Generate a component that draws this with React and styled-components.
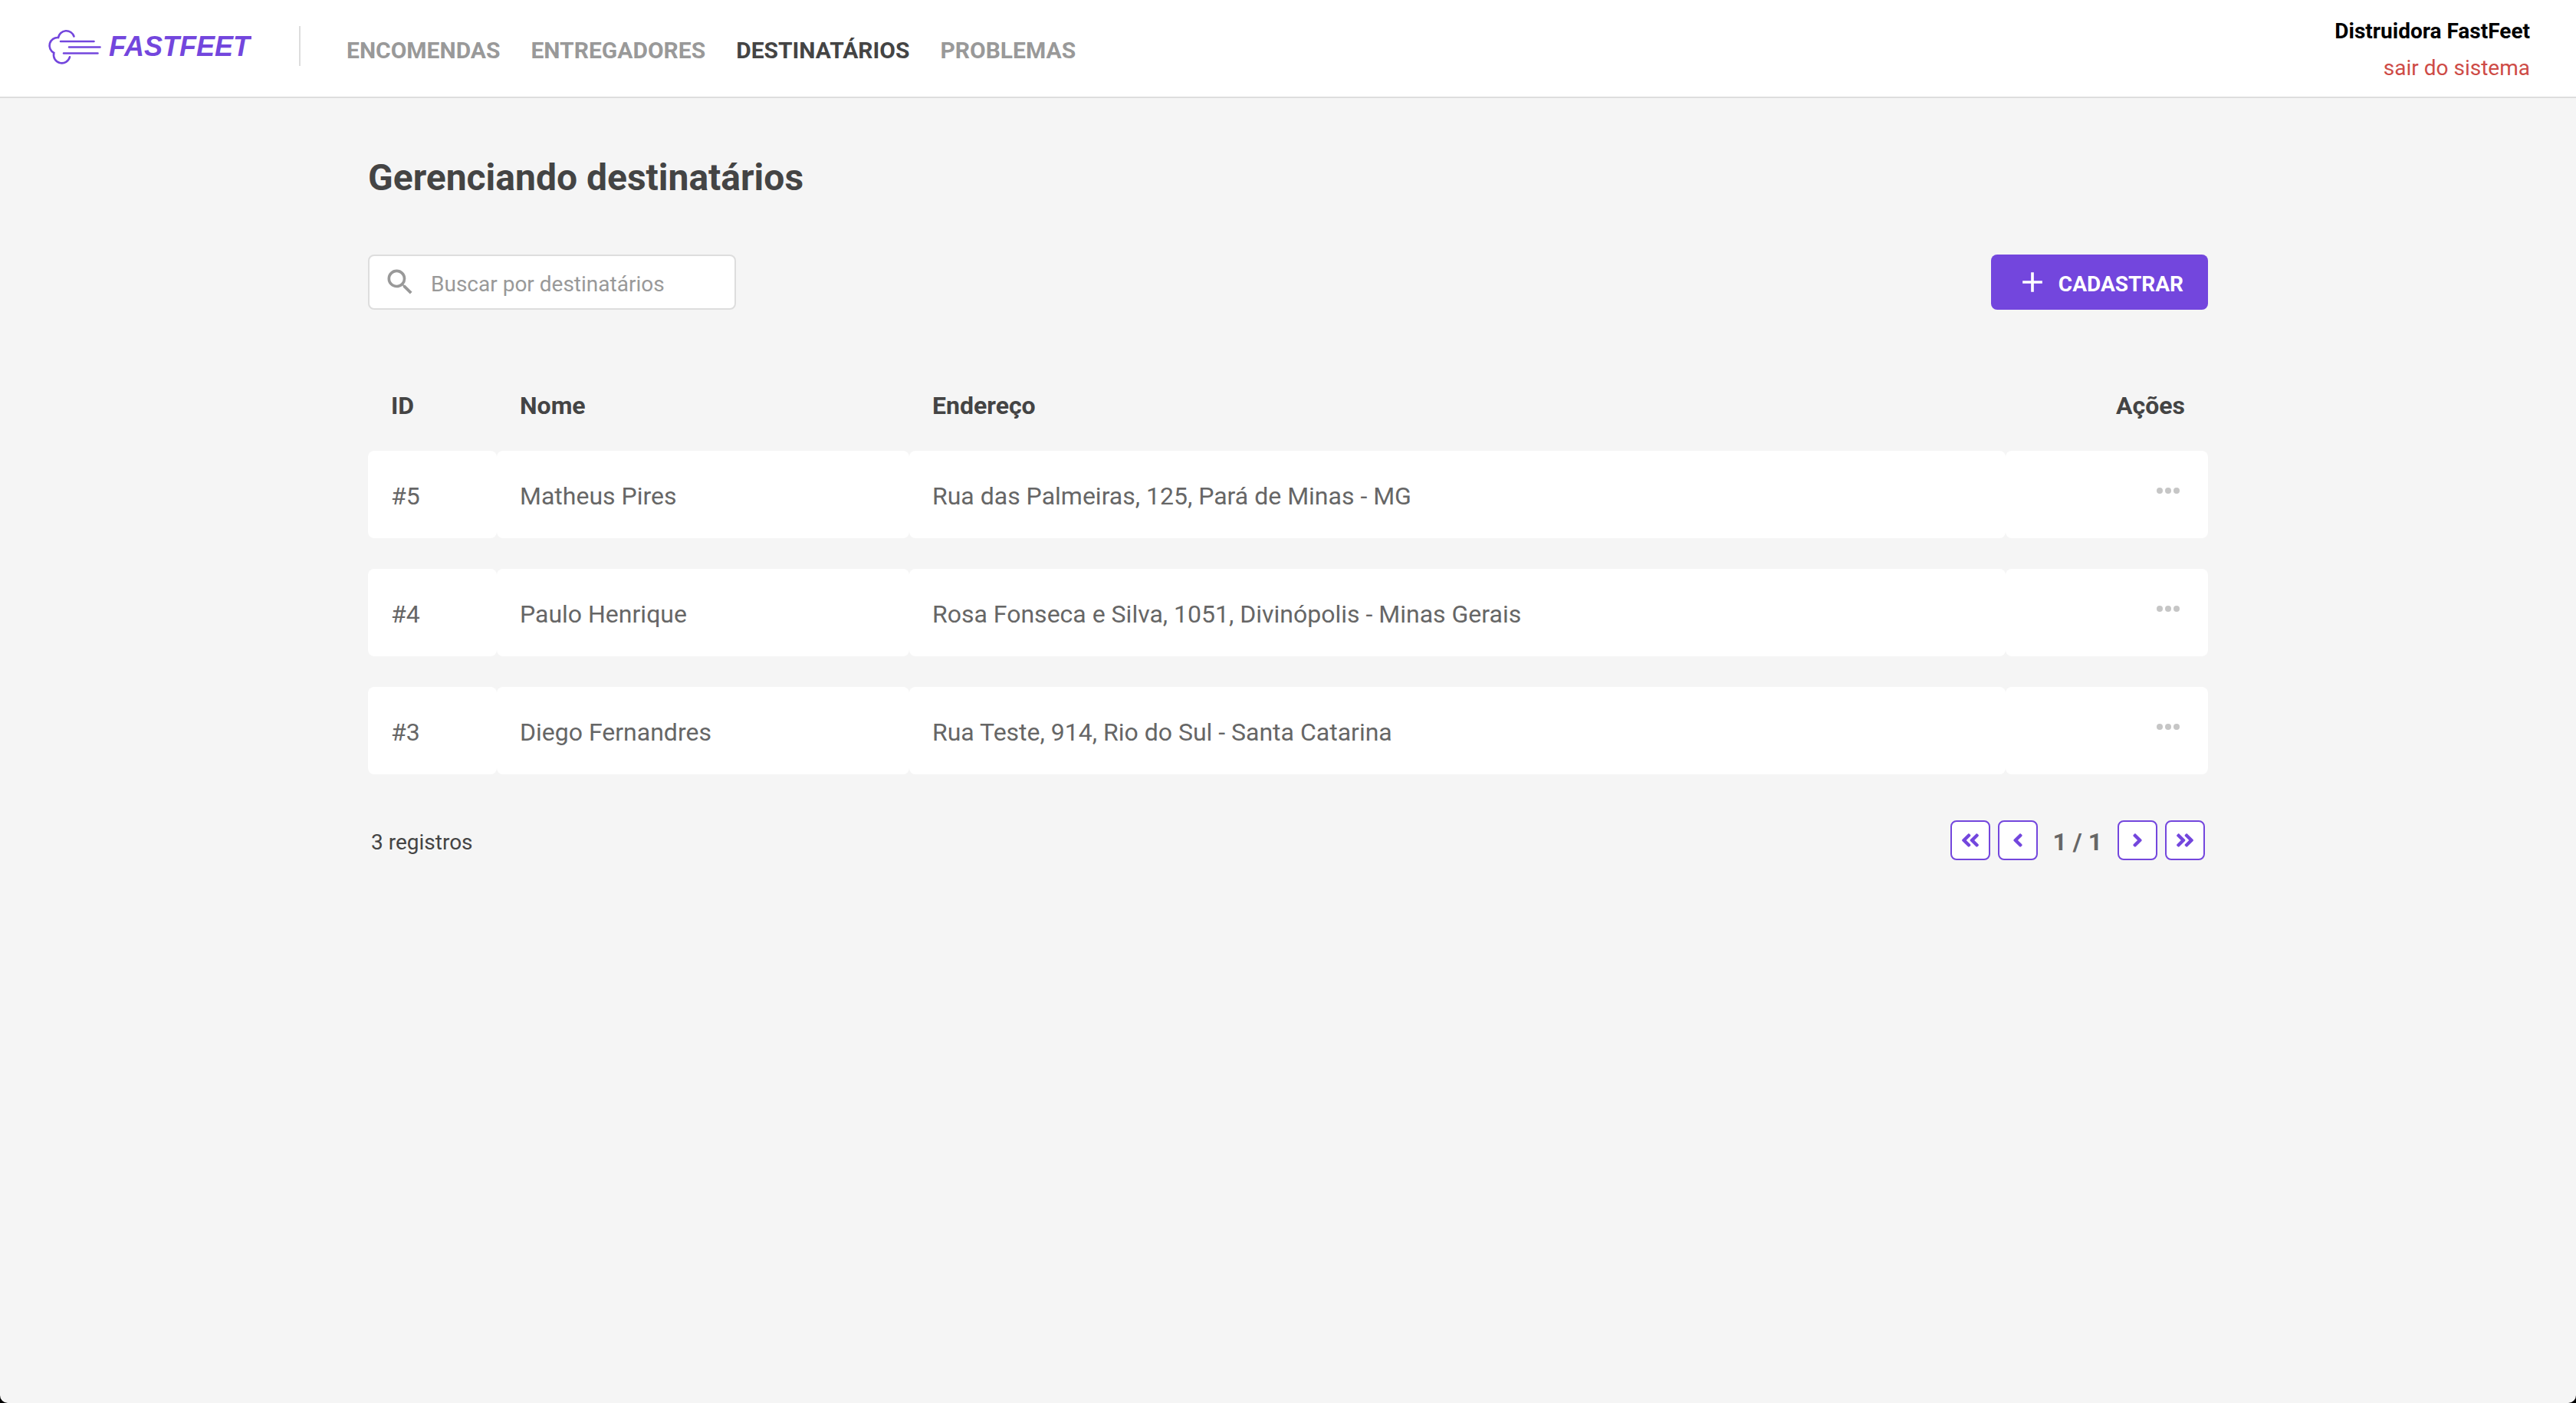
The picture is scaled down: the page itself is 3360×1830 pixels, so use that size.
import React, { useState } from 'react';
import styled, { createGlobalStyle, css } from 'styled-components';
import { MdSearch, MdAdd } from 'react-icons/md';
import {
  FaAngleDoubleLeft,
  FaAngleLeft,
  FaAngleRight,
  FaAngleDoubleRight,
} from 'react-icons/fa';

const colors = {
  primary: '#7346dd',
  danger: '#ce4b46',
  title: '#444444',
  text: '#666666',
  muted: '#999999',
  dots: '#c6c6c6',
  border: '#dddddd',
  page: '#f5f5f5',
};

const GlobalStyle = createGlobalStyle`
  *, *::before, *::after {
    box-sizing: border-box;
    margin: 0;
    padding: 0;
  }

  html {
    background: #000000;
  }

  body {
    color: ${colors.title};
    font: 400 28px/34px Roboto, Arial, sans-serif;
    -webkit-font-smoothing: antialiased;
  }

  button, input {
    font: inherit;
  }

  button {
    border: 0;
    background: none;
    cursor: pointer;
  }

  a {
    text-decoration: none;
  }
`;

const Page = styled.div`
  min-height: 100vh;
  background: ${colors.page};
  border-radius: 0 0 10px 10px;
`;

const Header = styled.header`
  display: flex;
  align-items: center;
  height: 128px;
  padding: 0 60px 6px;
  background: #ffffff;
  border-bottom: 2px solid ${colors.border};
`;

const LogoLink = styled.a`
  display: flex;
  align-items: center;
  height: 52px;
  padding-right: 62px;
  border-right: 2px solid ${colors.border};

  svg {
    display: block;
  }
`;

const LogoText = styled.text`
  fill: ${colors.primary};
  font: italic 700 36px 'Liberation Sans', Arial, sans-serif;
`;

const Nav = styled.nav`
  display: flex;
  gap: 40px;
  padding: 12px 0 0 60px;
`;

const NavLink = styled.a`
  color: ${({ $active }) => ($active ? colors.title : colors.muted)};
  font-size: 30px;
  font-weight: 700;
`;

const Account = styled.div`
  display: flex;
  flex-direction: column;
  align-items: flex-end;
  gap: 14px;
  margin-left: auto;
  padding-top: 10px;
`;

const AccountName = styled.strong`
  color: #000000;
`;

const SignOut = styled.button`
  color: ${colors.danger};
`;

const Content = styled.main`
  width: 100%;
  max-width: 2400px;
  margin: 0 auto;
  padding-top: 74px;
`;

const Title = styled.h1`
  font-size: 48px;
  line-height: 60px;
`;

const Toolbar = styled.div`
  display: flex;
  align-items: center;
  justify-content: space-between;
  margin-top: 70px;
`;

const SearchBox = styled.label`
  display: flex;
  align-items: center;
  gap: 18px;
  width: 480px;
  height: 72px;
  padding: 0 18px;
  background: #ffffff;
  border: 2px solid ${colors.border};
  border-radius: 8px;
  color: ${colors.muted};

  svg {
    flex: none;
  }
`;

const SearchInput = styled.input`
  flex: 1;
  min-width: 0;
  padding-top: 6px;
  border: 0;
  outline: 0;
  background: transparent;
  color: ${colors.title};

  &::placeholder {
    color: ${colors.muted};
    opacity: 1;
  }
`;

const AddButton = styled.button`
  display: flex;
  align-items: center;
  gap: 12px;
  height: 72px;
  padding: 0 32px;
  border-radius: 8px;
  background: ${colors.primary};
  color: #ffffff;
  font-weight: 700;

  span {
    padding-top: 6px;
  }
`;

const Table = styled.table`
  width: 100%;
  margin-top: 48px;
  table-layout: fixed;
  border-collapse: separate;
  border-spacing: 0 40px;
  font-size: 32px;
`;

const cell = css`
  padding: 4px 30px 0;
  text-align: ${({ $right }) => ($right ? 'right' : 'left')};
`;

const HeadCell = styled.th`
  ${cell}
  width: ${({ $width }) => $width || 'auto'};
  height: 56px;
  padding-top: 18px;
  font-weight: 700;
`;

const Cell = styled.td`
  ${cell}
  height: 114px;
  background: #ffffff;
  border-radius: 8px;
  color: ${colors.text};
`;

const MenuButton = styled.button`
  display: flex;
  margin: 0 0 14px auto;
  padding: 6px 7px;
  color: ${colors.dots};
`;

const Footer = styled.footer`
  display: flex;
  align-items: center;
  justify-content: space-between;
  padding: 20px 4px 0;
`;

const RecordCount = styled.span`
  padding-top: 6px;
`;

const Pager = styled.div`
  display: flex;
  align-items: center;
  gap: 10px;
`;

const PageButton = styled.button`
  display: flex;
  align-items: center;
  justify-content: center;
  width: 52px;
  height: 52px;
  background: #ffffff;
  border: 2px solid ${colors.primary};
  border-radius: 8px;
  color: ${colors.primary};
`;

const PageCount = styled.strong`
  padding: 4px 10px 0;
  color: ${colors.text};
  font-size: 32px;
`;

const navItems = ['ENCOMENDAS', 'ENTREGADORES', 'DESTINATÁRIOS', 'PROBLEMAS'];

const recipients = [
  { id: 5, name: 'Matheus Pires', address: 'Rua das Palmeiras, 125, Pará de Minas - MG' },
  { id: 4, name: 'Paulo Henrique', address: 'Rosa Fonseca e Silva, 1051, Divinópolis - Minas Gerais' },
  { id: 3, name: 'Diego Fernandres', address: 'Rua Teste, 914, Rio do Sul - Santa Catarina' },
];

function Logo() {
  return (
    <svg width="268" height="52" viewBox="60 34 268 52" role="img" aria-label="FastFeet">
      <g fill="none" stroke={colors.primary} strokeWidth="2.6" strokeLinecap="round">
        <path d="M96.500 47.500A10.600 10.600 0 0 0 76 49A10.600 10.600 0 0 0 70.300 69A10.600 10.600 0 0 0 91 74.300" />
        <path d="M79 54H122.500M90 61.500H130.500M83 69.500H127.500" />
      </g>
      <LogoText x="142" y="73">FASTFEET</LogoText>
    </svg>
  );
}

function Dots() {
  return (
    <svg width="30" height="8" viewBox="0 0 30 8" fill="currentColor" aria-hidden="true">
      <circle cx="4" cy="4" r="4" />
      <circle cx="15" cy="4" r="4" />
      <circle cx="26" cy="4" r="4" />
    </svg>
  );
}

export default function App() {
  const [query, setQuery] = useState('');
  const rows = recipients.filter(({ name }) =>
    name.toLowerCase().includes(query.toLowerCase())
  );

  return (
    <Page>
      <GlobalStyle />
      <Header>
        <LogoLink href="#">
          <Logo />
        </LogoLink>
        <Nav>
          {navItems.map((item) => (
            <NavLink key={item} href="#" $active={item === 'DESTINATÁRIOS'}>
              {item}
            </NavLink>
          ))}
        </Nav>
        <Account>
          <AccountName>Distruidora FastFeet</AccountName>
          <SignOut type="button">sair do sistema</SignOut>
        </Account>
      </Header>
      <Content>
        <Title>Gerenciando destinatários</Title>
        <Toolbar>
          <SearchBox>
            <MdSearch size={44} aria-hidden="true" />
            <SearchInput
              type="text"
              aria-label="Buscar por destinatários"
              placeholder="Buscar por destinatários"
              value={query}
              onChange={(event) => setQuery(event.target.value)}
            />
          </SearchBox>
          <AddButton type="button">
            <MdAdd size={44} aria-hidden="true" />
            <span>CADASTRAR</span>
          </AddButton>
        </Toolbar>
        <Table>
          <thead>
            <tr>
              <HeadCell $width="168px">ID</HeadCell>
              <HeadCell $width="538px">Nome</HeadCell>
              <HeadCell>Endereço</HeadCell>
              <HeadCell $width="264px" $right>Ações</HeadCell>
            </tr>
          </thead>
          <tbody>
            {rows.map(({ id, name, address }) => (
              <tr key={id}>
                <Cell>#{id}</Cell>
                <Cell>{name}</Cell>
                <Cell>{address}</Cell>
                <Cell $right>
                  <MenuButton type="button" aria-label={`Ações de ${name}`}>
                    <Dots />
                  </MenuButton>
                </Cell>
              </tr>
            ))}
          </tbody>
        </Table>
        <Footer>
          <RecordCount>{rows.length} registros</RecordCount>
          <Pager>
            <PageButton type="button" aria-label="Primeira página">
              <FaAngleDoubleLeft size={28} />
            </PageButton>
            <PageButton type="button" aria-label="Página anterior">
              <FaAngleLeft size={28} />
            </PageButton>
            <PageCount>1 / 1</PageCount>
            <PageButton type="button" aria-label="Próxima página">
              <FaAngleRight size={28} />
            </PageButton>
            <PageButton type="button" aria-label="Última página">
              <FaAngleDoubleRight size={28} />
            </PageButton>
          </Pager>
        </Footer>
      </Content>
    </Page>
  );
}
